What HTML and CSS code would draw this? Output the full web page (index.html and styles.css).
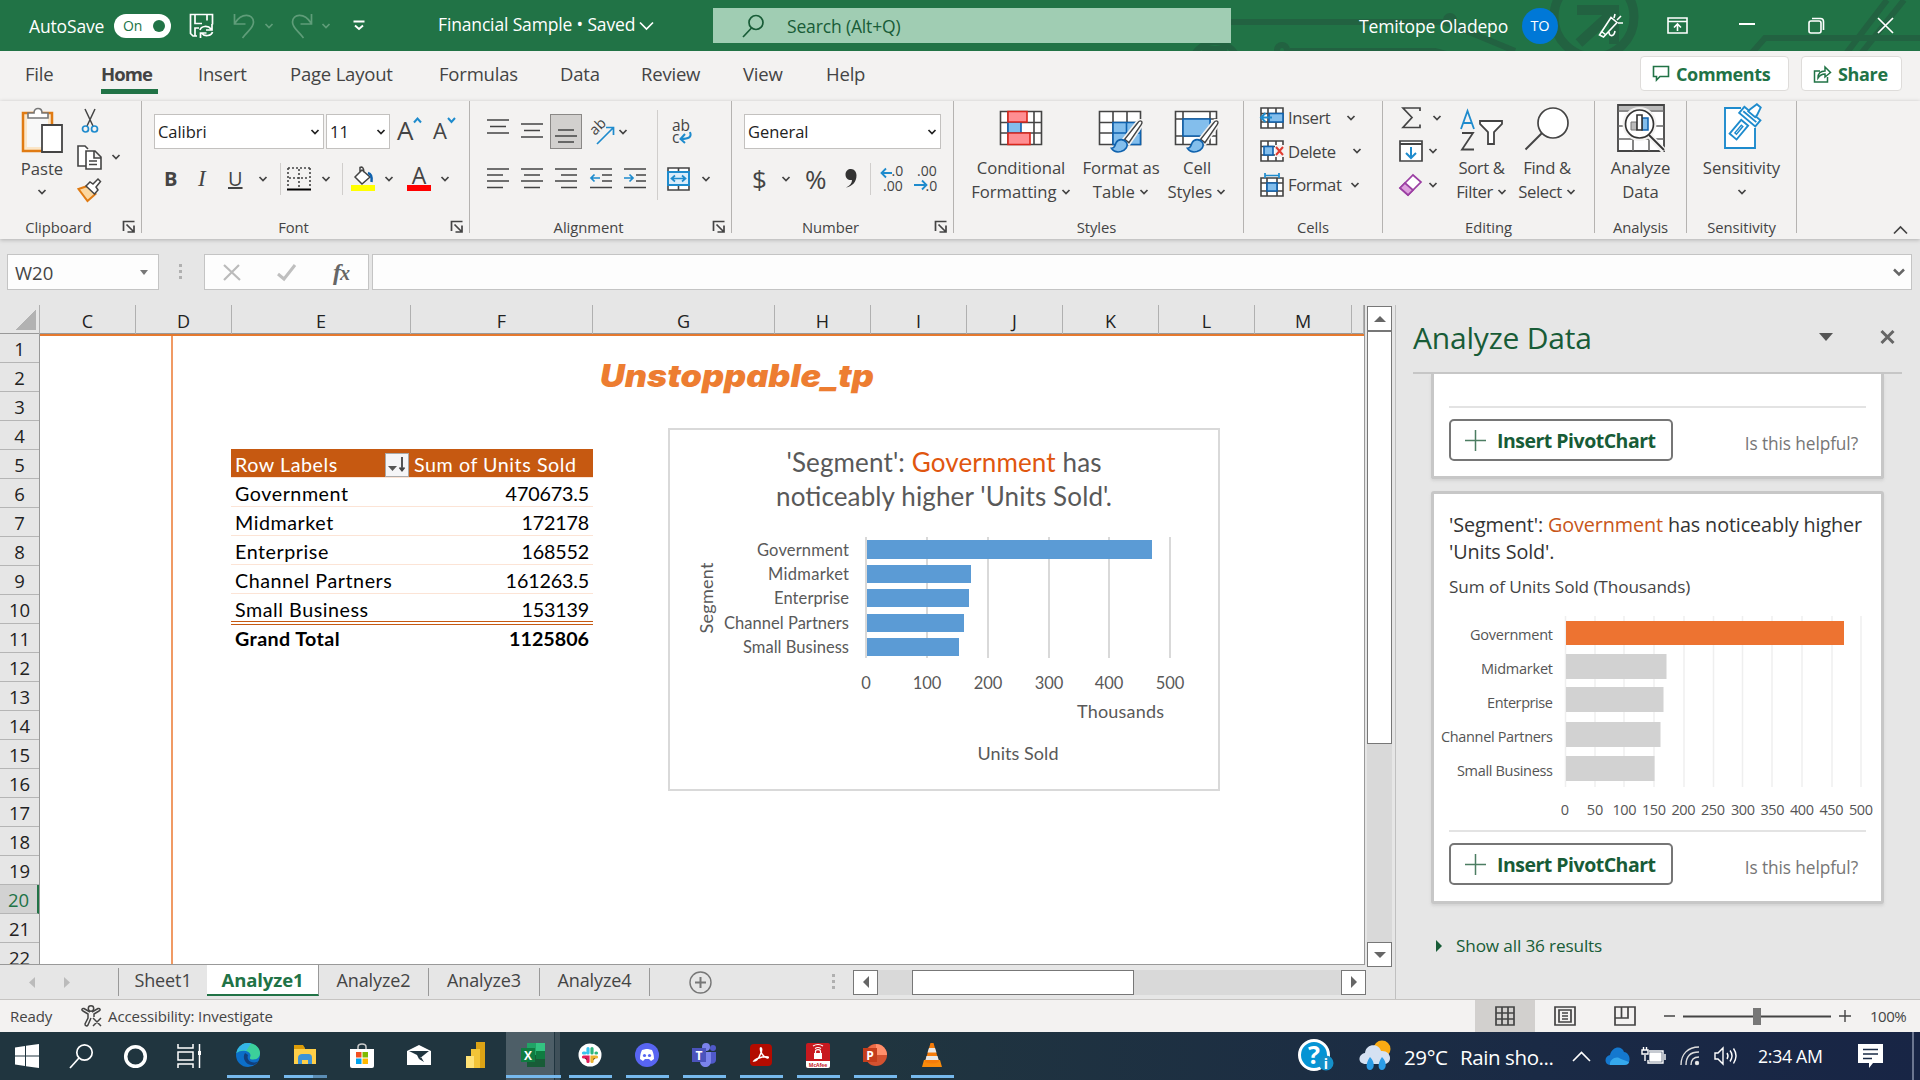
FILE: index.html
```html
<!DOCTYPE html>
<html lang="en">
<head>
<meta charset="utf-8">
<title>Financial Sample - Excel</title>
<link rel="stylesheet" href="styles.css">
</head>
<body>
<svg class="defs" width="0" height="0">
  <defs>
    <symbol id="chev" viewBox="0 0 10 8"><path d="M1.5 2l3.5 3.6L8.500 2" fill="none" stroke="currentColor" stroke-width="1.700"/></symbol>
    <symbol id="launch" viewBox="0 0 14 14"><path d="M1.500 11V1.500H12.500M4.500 4.500l7 7M12 5.500V12H5.500" fill="none" stroke="#444" stroke-width="1.700"/></symbol>
    <symbol id="brush" viewBox="0 0 36 36"><path d="M32 2c2 0 2.500 1.500 1 4L20 25l-4.500-3.500L29 4.500C30 3 31 2 32 2z" fill="#fff" stroke="#f3f2f1" stroke-width="5"/><path d="M32 2c2 0 2.500 1.500 1 4L20 25l-4.500-3.500L29 4.500C30 3 31 2 32 2z" fill="#fff" stroke="#444" stroke-width="1.500"/><path d="M1.500 31c4 0 3.500-3 5-6 2-4 8-4.500 11 0 2 4-1 8-6 9.500-4 1-8-.5-10-3.500z" fill="#83beec" stroke="#0f62ae" stroke-width="1.700"/></symbol>
  </defs>
</svg>
<div class="window">
  <header class="titlebar">
    <svg class="circuit" viewBox="0 0 760 51" width="760" height="51">
      <g fill="none" stroke="#226241" stroke-width="6">
        <path d="M70 22H285l70 29"/><circle cx="290" cy="20" r="4"/><circle cx="55" cy="66" r="24"/><path d="M130 51H275l30 8"/><circle cx="122" cy="50" r="5"/>
        <circle cx="434" cy="17" r="40" stroke-width="9"/><path d="M417 10h37v34M452 13l-33 30" stroke-width="10"/>
        <path d="M590 55l15-17h155M685 55l42-55M700 55l44-55"/>
      </g>
      <rect x="42" y="46" width="25" height="5" fill="#226241"/>
    </svg>
    <span>AutoSave</span>
    <span class="toggle">On<i></i></span>
    <svg width="26" height="26" viewBox="0 0 26 26" fill="none" stroke="#fff" stroke-width="1.700"><path d="M8 23H4L1.500 20.500V1.500h22v10M6 1.500v9h7M18 1.500v6M6 23v-8h4"/><path d="M11 17c1-4 8-5 11-1M23 11v6h-6M23.500 19c-1 4-8 5-11 1M11.500 25v-5h6"/></svg>
    <svg width="23" height="26" viewBox="0 0 23 26" fill="none" stroke="#5f9d79" stroke-width="1.700"><path d="M1.500 1v10h11M2 10C9-1 20 1 20.500 9c0 6-5 8-11 16"/></svg>
    <svg class="dim" width="10" height="8"><use href="#chev"/></svg>
    <svg width="23" height="26" viewBox="0 0 23 26" fill="none" stroke="#5f9d79" stroke-width="1.700"><path d="M20.500 1v10h-11M20 10C13-1 2 1 1.500 9c0 6 5 8 11 16"/></svg>
    <svg class="dim" width="10" height="8"><use href="#chev"/></svg>
    <svg width="14" height="11" viewBox="0 0 14 11" fill="none" stroke="#fff" stroke-width="1.900"><path d="M1.500 1.500h11M3 5.500l4 3.500 4-3.500"/></svg>
    <span class="doc">Financial Sample • Saved</span>
    <svg width="15" height="10" viewBox="0 0 15 10" fill="none" stroke="#fff" stroke-width="1.700"><path d="M1 1.500l6.500 6.500L14 1.500"/></svg>
    <div class="search"><svg width="23" height="24" viewBox="0 0 23 24" fill="none" stroke="#185c37" stroke-width="1.700"><circle cx="14" cy="8.500" r="7"/><path d="M9.500 14L1 23"/></svg><span>Search (Alt+Q)</span></div>
    <span class="user">Temitope Oladepo</span>
    <span class="avatar">TO</span>
    <svg width="26" height="26" viewBox="0 0 26 26" fill="none" stroke="#fff" stroke-width="1.600"><path d="M1.500 22L13 4.500l6 5L5.500 24zM3 18l5 4M11 19c0 5 5 5 6-1M16 5l1-4M19 7l4-4M20 10h5" /></svg>
    <svg width="21" height="17" viewBox="0 0 21 17" fill="none" stroke="#fff" stroke-width="1.600"><path d="M1 1h19v15H1zM1 4.500h19M10.500 14V7.500M7 10.500L10.500 7l3.500 3.500"/></svg>
    <svg width="16" height="6"><path d="M0 1h16" stroke="#fff" stroke-width="2"/></svg>
    <svg width="17" height="17" viewBox="0 0 17 17" fill="none" stroke="#fff" stroke-width="1.600"><rect x="1" y="4" width="12" height="12" rx="2"/><path d="M4 1.500h8.500c2 0 3 1 3 3V13"/></svg>
    <svg width="17" height="17" viewBox="0 0 17 17" fill="none" stroke="#fff" stroke-width="1.700"><path d="M1 1l15 15M16 1L1 16"/></svg>
  </header>

  <nav class="tabs">
    <span>File</span><span class="on">Home</span><span>Insert</span><span>Page Layout</span><span>Formulas</span><span>Data</span><span>Review</span><span>View</span><span>Help</span>
    <span class="pill"><svg width="18" height="17" viewBox="0 0 18 17" fill="none" stroke="#217346" stroke-width="1.600"><path d="M1.500 1.500h15v10H8L4.500 15v-3.500h-3z"/></svg>Comments</span>
    <span class="pill"><svg width="19" height="18" viewBox="0 0 19 18" fill="none" stroke="#217346" stroke-width="1.500"><path d="M7 6H1.500v11h13v-5M5 13c0-5 3-7 7-7V2l5.500 5.500L12 12V9c-3 0-5 1-7 4z"/></svg>Share</span>
  </nav>

  <section class="ribbon">
    <div class="group clip">
      <div class="stack paste">
        <svg width="42" height="46" viewBox="0 0 42 46"><path d="M2 6h29v38H2z" fill="#fbe6c8" stroke="#e07b13" stroke-width="2.500"/><path d="M6 10h21v30H6z" fill="#f8f8f8"/><path d="M7 11V6h6c0-6 8-6 8 0h6v5z" fill="#fff" stroke="#777" stroke-width="1.600"/><path d="M21 18h20v27H21z" fill="#fff" stroke="#444" stroke-width="1.800"/></svg>
        <span>Paste</span><svg width="10" height="8"><use href="#chev"/></svg>
      </div>
      <div class="clipcol">
        <svg width="18" height="25" viewBox="0 0 18 25" fill="none"><path d="M4 1l8 17M14 1L6 18" stroke="#444" stroke-width="1.500"/><circle cx="4.500" cy="21" r="3" stroke="#1e8bcd" stroke-width="1.700"/><circle cx="13.500" cy="21" r="3" stroke="#1e8bcd" stroke-width="1.700"/></svg>
        <div class="copy"><svg width="25" height="25" viewBox="0 0 25 25" fill="#fff" stroke="#444" stroke-width="1.600"><path d="M9 21H1V1h7l3 3"/><path d="M9 6h9l6 6v12H9zM17 6v7h7M12 16h8M12 19.500h8"/></svg><svg width="10" height="8"><use href="#chev"/></svg></div>
        <svg width="25" height="24" viewBox="0 0 25 24"><path d="M1.500 11l9-3 8 8-8 7z" fill="#fbd7a0" stroke="#e07b13" stroke-width="2"/><path d="M9 8l4-4 3 2 5-5 2.500 2.500-4.500 5.500 2 3-3.500 4z" fill="#fff" stroke="#444" stroke-width="1.500"/></svg>
      </div>
      <footer><span>Clipboard</span><svg width="14" height="14"><use href="#launch"/></svg></footer>
    </div>

    <div class="group font">
      <div class="r1">
        <span class="combo">Calibri<svg width="10" height="8"><use href="#chev"/></svg></span>
        <span class="combo">11<svg width="10" height="8"><use href="#chev"/></svg></span>
        <span class="bigA">A<svg width="9" height="7" viewBox="0 0 9 7" fill="none" stroke="#1e8bcd" stroke-width="2"><path d="M1 5.500l3.500-4 3.500 4"/></svg></span>
        <span class="bigA sm">A<svg width="9" height="7" viewBox="0 0 9 7" fill="none" stroke="#1e8bcd" stroke-width="2"><path d="M1 1l3.500 4L8 1"/></svg></span>
      </div>
      <div class="r2">
        <b>B</b><em>I</em><u>U</u><svg width="10" height="8"><use href="#chev"/></svg><i class="bar"></i>
        <svg width="24" height="24" viewBox="0 0 24 24" fill="none" stroke="#444" stroke-width="1.600"><path d="M1 1h22M1 1v20M23 1v20M12 2v18M2 11h20" stroke-dasharray="2 2"/><path d="M0 22.500h24" stroke="#000" stroke-width="2"/></svg>
        <svg width="10" height="8"><use href="#chev"/></svg><i class="bar"></i>
        <svg width="24" height="25" viewBox="0 0 24 25"><path d="M0 19h24v6H0z" fill="#ff0"/><path d="M4 11l7-7 8 7-8 7zM9 6V1.500c2-1 4 0 4 5" fill="#fff" stroke="#444" stroke-width="1.500"/><path d="M17 7c4 1 4 5 3.500 9" stroke="#0f62ae" fill="none" stroke-width="2.500"/></svg>
        <svg width="10" height="8"><use href="#chev"/></svg>
        <span class="fontcolor">A</span><svg width="10" height="8"><use href="#chev"/></svg>
      </div>
      <footer><span>Font</span><svg width="14" height="14"><use href="#launch"/></svg></footer>
    </div>

    <div class="group align">
      <div class="r1">
        <svg width="22" height="34" viewBox="0 0 22 34" stroke="#444" stroke-width="1.700"><path d="M0 5h22M3 11.500h16M0 18h22"/></svg>
        <svg width="22" height="34" viewBox="0 0 22 34" stroke="#444" stroke-width="1.700"><path d="M0 9h22M3 15.500h16M0 22h22"/></svg>
        <span class="pressed"><svg width="22" height="34" viewBox="0 0 22 34" stroke="#444" stroke-width="1.700"><path d="M3 15h16M0 21h22M3 27h16"/></svg></span>
        <svg width="26" height="26" viewBox="0 0 26 26"><text transform="translate(6 17) rotate(-45)" font-size="14.500" fill="#444">ab</text><path d="M8 25L24 9M17 8.500h7.500V16" fill="none" stroke="#1e8bcd" stroke-width="1.700"/></svg>
        <svg width="10" height="8"><use href="#chev"/></svg>
        <svg width="22" height="26" viewBox="0 0 22 26"><text x="1" y="12" font-size="15.500" fill="#444">ab</text><text x="1" y="24" font-size="15.500" fill="#444">c</text><path d="M19 13c2 5-1 7-9 7M14 15l-4.500 5 4.500 4" fill="none" stroke="#1e8bcd" stroke-width="2"/></svg>
      </div>
      <div class="r2">
        <svg width="22" height="21" stroke="#444" stroke-width="1.700"><path d="M0 1h22M0 7h16M0 13h22M0 19.500h16"/></svg>
        <svg width="22" height="21" stroke="#444" stroke-width="1.700"><path d="M0 1h22M3 7h16M0 13h22M3 19.500h16"/></svg>
        <svg width="22" height="21" stroke="#444" stroke-width="1.700"><path d="M0 1h22M6 7h16M0 13h22M6 19.500h16"/></svg>
        <svg width="22" height="21" stroke="#444" stroke-width="1.700"><path d="M0 1h22M12 7h10M12 13h10M0 19.500h22"/><path d="M10 10H1M4.500 6.500L1 10l3.500 3.500" fill="none" stroke="#1e8bcd"/></svg>
        <svg width="22" height="21" stroke="#444" stroke-width="1.700"><path d="M0 1h22M12 7h10M12 13h10M0 19.500h22"/><path d="M0 10h9M5.500 6.500L9 10l-3.500 3.500" fill="none" stroke="#1e8bcd"/></svg>
        <svg width="23" height="24" viewBox="0 0 23 24" fill="#fff" stroke="#444" stroke-width="1.600"><path d="M1 1h21v22H1zM11.500 1v22"/><path d="M1 5h21v13H1z" fill="#d9ecfa" stroke="#1e8bcd" stroke-width="2"/><path d="M5 11.500h13M8 8.500l-3.500 3L8 14.500M15 8.500l3.500 3-3.500 3" fill="none" stroke="#1e8bcd" stroke-width="1.700"/></svg>
        <svg width="10" height="8"><use href="#chev"/></svg>
      </div>
      <footer><span>Alignment</span><svg width="14" height="14"><use href="#launch"/></svg></footer>
    </div>

    <div class="group number">
      <div class="r1"><span class="combo">General<svg width="10" height="8"><use href="#chev"/></svg></span></div>
      <div class="r2">
        <span class="sym">$</span><svg width="10" height="8"><use href="#chev"/></svg><span class="sym">%</span>
        <svg width="12" height="19" viewBox="0 0 12 19"><path d="M1 18.500C5 17 7 14 7 11 3 11.500 .5 9 .5 5.500.5 2 3 0 6 0c3.500 0 5.500 3 5.500 6.500 0 6-4 11-10.500 12z" fill="#333"/></svg>
        <i class="bar"></i>
        <svg width="24" height="28" viewBox="0 0 24 28"><text x="11.500" y="11" font-size="14" fill="#444">.0</text><text x="3" y="26" font-size="14" fill="#444">.00</text><path d="M12 8H1.500M6 3.500L1.500 8 6 12.500" fill="none" stroke="#1e8bcd" stroke-width="1.800"/></svg>
        <svg width="24" height="28" viewBox="0 0 24 28"><text x="3" y="11" font-size="14" fill="#444">.00</text><text x="11.500" y="26" font-size="14" fill="#444">.0</text><path d="M0 20h12M8 15.500l4.500 4.500L8 24.500" fill="none" stroke="#1e8bcd" stroke-width="1.800"/></svg>
      </div>
      <footer><span>Number</span><svg width="14" height="14"><use href="#launch"/></svg></footer>
    </div>

    <div class="group styles">
      <div class="stack big"><svg width="44" height="42" viewBox="0 0 44 42"><path d="M1.500 1.500h41v33h-41zM1.500 12.500h41M1.500 23h41M9 1.500v33M35 1.500v33" fill="#fff" stroke="#444" stroke-width="1.600"/><path d="M9 12h13v11H9z" fill="#83beec" stroke="#0f62ae" stroke-width="1.600"/><path d="M9 1.500h19V12H9zM9 23h22v11.500H9z" fill="#ff8e92" stroke="#d9261c" stroke-width="1.600"/></svg><span>Conditional</span><span>Formatting <svg width="10" height="8"><use href="#chev"/></svg></span></div>
      <div class="stack big"><svg width="46" height="42" viewBox="0 0 46 42"><path d="M1.500 1.500h41v33h-41zM1.500 12.500h41M15 1.500v33M29 1.500v33M1.500 23h41" fill="#fff" stroke="#444" stroke-width="1.600"/><path d="M15 12.500h27.500v22H15zM28.500 12.500v22M15 23h27.500" fill="#83beec" stroke="#0f62ae" stroke-width="1.600"/><svg x="12" y="9" width="34" height="34"><use href="#brush"/></svg></svg><span>Format as</span><span>Table <svg width="10" height="8"><use href="#chev"/></svg></span></div>
      <div class="stack big"><svg width="46" height="42" viewBox="0 0 46 42"><path d="M1.500 1.500h41v33h-41zM1.500 9h41M9 1.500v33M36 1.500v33M1.500 26h41" fill="#fff" stroke="#444" stroke-width="1.600"/><path d="M9 9h27v17H9z" fill="#83beec" stroke="#0f62ae" stroke-width="1.600"/><svg x="12" y="9" width="34" height="34"><use href="#brush"/></svg></svg><span>Cell</span><span>Styles <svg width="10" height="8"><use href="#chev"/></svg></span></div>
      <footer><span>Styles</span></footer>
    </div>

    <div class="group cells">
      <div class="line"><svg width="24" height="22" viewBox="0 0 24 22"><path d="M1 1h22v20H1zM1 6.500h22M1 15h22M8 1v20M16 1v20" fill="#fff" stroke="#444" stroke-width="1.600"/><path d="M9 6.500h14V15H9z" fill="#83beec" stroke="#0f62ae" stroke-width="1.600"/><path d="M12 10.500H1M5.500 6L1 10.500 5.500 15" fill="none" stroke="#1e8bcd" stroke-width="2"/></svg><span>Insert</span><svg width="10" height="8"><use href="#chev"/></svg></div>
      <div class="line del"><svg width="24" height="22" viewBox="0 0 24 22"><path d="M1 1h22v20H1zM1 6.500h22M1 15h22M8 1v20M16 1v20" fill="#fff" stroke="#444" stroke-width="1.600"/><path d="M15 5h9v12h-9z" fill="#f3f2f1"/><path d="M4 6.500h9V15H4z" fill="#83beec" stroke="#0f62ae" stroke-width="1.600"/><path d="M16 7l7 8M23 7l-7 8" stroke="#e03c31" stroke-width="2"/></svg><span>Delete</span><svg width="10" height="8"><use href="#chev"/></svg></div>
      <div class="line fmt"><svg width="24" height="24" viewBox="0 0 24 24"><path d="M1 5h22v18H1zM1 10h22M1 18h22M7 5v18M17 5v18" fill="#fff" stroke="#444" stroke-width="1.600"/><path d="M7 10h10v8H7z" fill="#83beec" stroke="#0f62ae" stroke-width="1.600"/><path d="M5 0v5M19 0v5M5 2.500h14" stroke="#1e8bcd" stroke-width="1.700"/></svg><span>Format</span><svg width="10" height="8"><use href="#chev"/></svg></div>
      <footer><span>Cells</span></footer>
    </div>

    <div class="group editing">
      <div class="edcol">
        <div class="sum"><svg width="24" height="22" viewBox="0 0 24 22"><path d="M21 4V1H4l9 9.500L4 20.500h17v-3" fill="none" stroke="#444" stroke-width="1.700"/></svg><svg width="10" height="8"><use href="#chev"/></svg></div>
        <div><svg width="24" height="22" viewBox="0 0 24 22"><path d="M1 1h22v20H1z" fill="#fff" stroke="#444" stroke-width="1.700"/><path d="M1 4h22" stroke="#444" stroke-width="2"/><path d="M12 7v11M7 13l5 5 5-5" fill="none" stroke="#1e8bcd" stroke-width="2"/></svg><svg width="10" height="8"><use href="#chev"/></svg></div>
        <div><svg width="24" height="24" viewBox="0 0 24 24"><path d="M1 15L14 2l8 7L9 22z" fill="#fff" stroke="#9b3fa3" stroke-width="1.700"/><path d="M1 15l5-5 8 7-5 5z" fill="#dda0dd" stroke="#9b3fa3" stroke-width="1.700"/></svg><svg width="10" height="8"><use href="#chev"/></svg></div>
      </div>
      <div class="stack big"><svg width="44" height="42" viewBox="0 0 44 42"><path d="M1 19L7.500 1 14 19M3 13h9" fill="none" stroke="#1e8bcd" stroke-width="1.800"/><path d="M2 23h11L2 39.500h12" fill="none" stroke="#444" stroke-width="1.800"/><path d="M20 11h22v3l-8 8v12h-6V22l-8-8z" fill="#fff" stroke="#444" stroke-width="1.800"/></svg><span>Sort &amp;</span><span>Filter <svg width="10" height="8"><use href="#chev"/></svg></span></div>
      <div class="stack big"><svg width="46" height="46" viewBox="0 0 46 46"><circle cx="29" cy="19" r="15" fill="#fff" stroke="#444" stroke-width="1.700"/><path d="M18 29L1.500 45.500" stroke="#444" stroke-width="1.900"/></svg><span>Find &amp;</span><span>Select <svg width="10" height="8"><use href="#chev"/></svg></span></div>
      <footer><span>Editing</span></footer>
    </div>

    <div class="group analysis">
      <div class="stack big"><svg width="48" height="48" viewBox="0 0 48 48"><path d="M1 1h46v46H1z" fill="#fff" stroke="#444" stroke-width="1.800"/><path d="M2 2h44v4H2z" fill="#bbb"/><path d="M1 7h46M1 22h46M1 35h46M16 35v12M32 35v12" stroke="#666" stroke-width="1.600"/><path d="M31 30l16 17" stroke="#f3f2f1" stroke-width="6"/><circle cx="22.500" cy="20" r="17" fill="#f3f2f1"/><circle cx="22.500" cy="20" r="14" fill="#fff" stroke="#333" stroke-width="1.700"/><path d="M32 31l15 15" stroke="#333" stroke-width="1.800"/><path d="M14 18h6v8h-6z" fill="#bbb" stroke="#777"/><path d="M25 14h6v12h-6z" fill="#83beec" stroke="#0f62ae" stroke-width="1.500"/><path d="M20 11h5v15h-5z" fill="#fff" stroke="#333" stroke-width="1.600"/></svg><span>Analyze</span><span>Data</span></div>
      <footer><span>Analysis</span></footer>
    </div>

    <div class="group sens">
      <div class="stack big"><svg width="46" height="46" viewBox="0 0 46 46" fill="#fff" stroke="#1e8bcd" stroke-width="1.900"><path d="M22 4H6v40h30V24"/><g transform="rotate(40 24 20)"><path d="M20 18h9v18h-9z"/><path d="M23.500 22v10h2V22z" stroke-width="1.400"/><path d="M14 6h21v8H14zM16 10h17" /><path d="M20 6v-3l2-8h5l2 8v3z" transform="translate(0 1)"/></g></svg><span>Sensitivity</span><span><svg width="10" height="8"><use href="#chev"/></svg></span></div>
      <footer><span>Sensitivity</span></footer>
    </div>
    <svg class="collapse" width="15" height="10" viewBox="0 0 15 10" fill="none" stroke="#444" stroke-width="1.700"><path d="M1 8.500L7.500 2 14 8.500"/></svg>
  </section>

  <section class="formulabar">
    <div class="namebox"><span>W20</span><svg width="8" height="5"><path d="M0 0h8L4 5z" fill="#777"/></svg></div>
    <svg width="4" height="16"><path d="M0 0h3v3H0zM0 6h3v3H0zM0 12h3v3H0z" fill="#b0b0b0"/></svg>
    <div class="fx"><svg width="18" height="17" viewBox="0 0 18 17" stroke="#bbb" stroke-width="2.200"><path d="M1 1l16 15M16 1L1 16"/></svg><svg width="20" height="17" viewBox="0 0 20 17" fill="none" stroke="#bfbfbf" stroke-width="3"><path d="M1 10l6 5L18 1"/></svg><span><i>f</i><i>x</i></span></div>
    <div class="formula"><svg width="12" height="9" viewBox="0 0 12 9" fill="none" stroke="#666" stroke-width="2.500"><path d="M1 1.500l5 5 5-5"/></svg></div>
  </section>

  <main class="work">
    <div class="book">
      <div class="colheads"><span class="corner"></span><span>C</span><span>D</span><span>E</span><span>F</span><span>G</span><span>H</span><span>I</span><span>J</span><span>K</span><span>L</span><span>M</span><span></span></div>
      <div class="sheetrow">
        <div class="rowheads"><span>1</span><span>2</span><span>3</span><span>4</span><span>5</span><span>6</span><span>7</span><span>8</span><span>9</span><span>10</span><span>11</span><span>12</span><span>13</span><span>14</span><span>15</span><span>16</span><span>17</span><span>18</span><span>19</span><span class="cur">20</span><span>21</span><span>22</span></div>
        <div class="cellsarea">
          <div class="marginline"></div>
          <h1><span>Unstoppable_tp</span></h1>
          <div class="pivot">
            <div class="prow head"><span>Row Labels</span><i class="filter"><svg width="20" height="18" viewBox="0 0 20 18"><path d="M1 10h9l-4.500 5z" fill="#555"/><path d="M15 1v14M12.500 11.500L15 14.500l2.500-3" fill="none" stroke="#444" stroke-width="1.800"/></svg></i><span>Sum of Units Sold</span></div>
            <div class="prow"><span>Government</span><span class="num">470673.5</span></div>
            <div class="prow"><span>Midmarket</span><span class="num">172178</span></div>
            <div class="prow"><span>Enterprise</span><span class="num">168552</span></div>
            <div class="prow"><span>Channel Partners</span><span class="num">161263.5</span></div>
            <div class="prow last"><span>Small Business</span><span class="num">153139</span></div>
            <div class="prow total"><span>Grand Total</span><span class="num">1125806</span></div>
          </div>
          <svg class="chart" width="552" height="363" viewBox="668 428 552 363">
            <rect x="669" y="429" width="550" height="361" fill="#fff" stroke="#d9d9d9" stroke-width="2"/>
            <g font-size="26" text-anchor="middle"><text x="944" y="472" textLength="315">'Segment': <tspan fill="#e0560f">Government</tspan> has</text><text x="944" y="506" textLength="336">noticeably higher 'Units Sold'.</text></g>
            <path d="M866 537v121M927 537v121M988 537v121M1049 537v121M1109 537v121M1170 537v121" stroke="#d9d9d9" stroke-width="2"/>
            <path d="M867 540h285v19H867zM867 565h104v18H867zM867 589h102v18H867zM867 614h97v18h-97zM867 638h92v18h-92z" fill="#5b9bd5"/>
            <g font-size="16.500" text-anchor="end"><text x="849" y="555.500" textLength="92">Government</text><text x="849" y="579.500" textLength="81">Midmarket</text><text x="849" y="603.500" textLength="75">Enterprise</text><text x="849" y="628.500" textLength="125">Channel Partners</text><text x="849" y="652.500" textLength="106">Small Business</text></g>
            <g font-size="16.500" text-anchor="middle"><text x="866" y="689">0</text><text x="927" y="689">100</text><text x="988" y="689">200</text><text x="1049" y="689">300</text><text x="1109" y="689">400</text><text x="1170" y="689">500</text></g>
            <g font-size="18" text-anchor="middle"><text x="1120.500" y="718" textLength="87">Thousands</text><text x="1018" y="760" textLength="81">Units Sold</text><text transform="translate(713 598) rotate(-90)" textLength="71">Segment</text></g>
          </svg>
        </div>
      </div>
    </div>
    <div class="vscroll"><span class="btn"><svg width="12" height="6"><path d="M0 6h12L6 0z" fill="#666"/></svg></span><span class="thumb"></span><span class="track"></span><span class="btn"><svg width="12" height="6"><path d="M0 0h12L6 6z" fill="#666"/></svg></span></div>
    <aside class="pane">
      <div class="panehead"><h2>Analyze Data</h2><svg width="14" height="8"><path d="M0 0h14L7 8z" fill="#555"/></svg><svg width="15" height="14" viewBox="0 0 15 14" stroke="#666" stroke-width="3"><path d="M1.500 1l12 12M13.500 1l-12 12"/></svg></div>
      <div class="card first">
        <div class="actions"><span class="insert"><svg width="21" height="21" stroke="#4c7d62" stroke-width="1.500"><path d="M10.500 0v21M0 10.500h21"/></svg>Insert PivotChart</span><span class="help">Is this helpful?</span></div>
      </div>
      <div class="card second">
        <p class="insight">'Segment': <em>Government</em> has noticeably higher<br>'Units Sold'.</p>
        <p class="sub">Sum of Units Sold (Thousands)</p>
        <svg class="mini" width="447" height="215" viewBox="1434 616 447 215">
          <path d="M1565.500 617v171M1595 617v171M1624 617v171M1654 617v171M1684 617v171M1713.500 617v171M1742.500 617v171M1772 617v171M1802 617v171M1832 617v171M1861 617v171" stroke="#efefef" stroke-width="1.500"/>
          <path d="M1566 622h278v24h-278z" fill="#ed7331"/><path d="M1566 655h100.500v25H1566zM1566 688h97.500v25H1566zM1566 723h94.500v25H1566zM1566 757h88.500v25H1566z" fill="#d2d2d2"/>
          <g font-size="14.500" text-anchor="end"><text x="1553" y="641" textLength="83">Government</text><text x="1553" y="675" textLength="72">Midmarket</text><text x="1553" y="709" textLength="66">Enterprise</text><text x="1553" y="743" textLength="112">Channel Partners</text><text x="1553" y="777" textLength="96">Small Business</text></g>
          <g font-size="14.500" text-anchor="middle"><text x="1565" y="816">0</text><text x="1595" y="816">50</text><text x="1624.500" y="816" textLength="24">100</text><text x="1654" y="816" textLength="24">150</text><text x="1683.500" y="816" textLength="24">200</text><text x="1713" y="816" textLength="24">250</text><text x="1743" y="816" textLength="24">300</text><text x="1772.500" y="816" textLength="24">350</text><text x="1802" y="816" textLength="24">400</text><text x="1831.500" y="816" textLength="24">450</text><text x="1861" y="816" textLength="24">500</text></g>
        </svg>
        <div class="actions"><span class="insert"><svg width="21" height="21" stroke="#4c7d62" stroke-width="1.500"><path d="M10.500 0v21M0 10.500h21"/></svg>Insert PivotChart</span><span class="help">Is this helpful?</span></div>
      </div>
      <div class="more"><svg width="6" height="12"><path d="M0 0v12l6-6z" fill="#185c37"/></svg><span>Show all 36 results</span></div>
    </aside>
    <div class="sheettabs">
      <svg width="6" height="11"><path d="M6 0v11L0 5.500z" fill="#bbb"/></svg><svg width="6" height="11"><path d="M0 0v11l6-5.500z" fill="#bbb"/></svg>
      <span class="tab t1">Sheet1</span><span class="tab on">Analyze1</span><span class="tab">Analyze2</span><span class="tab">Analyze3</span><span class="tab">Analyze4</span>
      <svg class="add" width="23" height="23" viewBox="0 0 23 23" fill="none" stroke="#777" stroke-width="1.400"><circle cx="11.500" cy="11.500" r="10.500"/><path d="M11.500 6v11M6 11.500h11" stroke-width="2"/></svg>
      <svg width="4" height="16"><path d="M0 0h3v3H0zM0 6h3v3H0zM0 12h3v3H0z" fill="#b0b0b0"/></svg>
      <div class="hscroll"><span class="btn"><svg width="6" height="12"><path d="M6 0v12L0 6z" fill="#666"/></svg></span><span class="track"></span><span class="thumb"></span><span class="track rest"></span><span class="btn"><svg width="6" height="12"><path d="M0 0v12l6-6z" fill="#666"/></svg></span></div>
    </div>
  </main>

  <footer class="status">
    <span>Ready</span>
    <svg width="22" height="22" viewBox="0 0 22 22" fill="none" stroke="#444" stroke-width="1.500"><circle cx="10" cy="3.500" r="2.700"/><path d="M9 7L3 3.500C1 3 0 5 2 6l5 3v4L4 19c0 2 2 2.500 3 1l3-7M11 7l6-3.500c2-.5 3 1.500 1 2.500l-5 3v3M12 13l8 8M20 13l-8 8"/></svg>
    <span class="acc">Accessibility: Investigate</span>
    <span class="view"><svg width="20" height="20" viewBox="0 0 20 20" fill="none" stroke="#444" stroke-width="1.700"><path d="M1 1h18v18H1zM7 1v18M13 1v18M1 7h18M1 13h18"/></svg></span>
    <svg width="22" height="20" viewBox="0 0 22 20" fill="none" stroke="#444" stroke-width="1.700"><path d="M1 1h20v18H1zM5 4h12v12H5zM8 7h6M8 10h6M8 13h6"/></svg>
    <svg width="22" height="20" viewBox="0 0 22 20" fill="none" stroke="#444" stroke-width="1.700"><path d="M1 1h20v18H1zM1 12h13V1M7.500 1v11"/></svg>
    <svg width="190" height="20" viewBox="0 0 190 20" stroke="#444" stroke-width="1.400"><path d="M1 10h11M176 10h12M182 4v12"/><path d="M20 10.500h148" stroke-width="2"/><path d="M90 2h8v17h-8z" fill="#777" stroke="none"/></svg>
    <span class="zoom">100%</span>
  </footer>

  <div class="taskbar">
    <div class="sys">
      <svg width="24" height="24" fill="#fff"><path d="M0 3.500L10 2v9.500H0zM11 1.800L24 0v11.500H11zM0 12.500h10V22L0 20.500zM11 12.500h13V24l-13-1.800z"/></svg>
      <svg width="24" height="25" fill="none" stroke="#fff" stroke-width="1.700"><circle cx="15.500" cy="8.500" r="7.700"/><path d="M10 14L1 24"/></svg>
      <svg width="25" height="25" fill="none" stroke="#fff" stroke-width="3.500"><circle cx="11.500" cy="12.500" r="9.800"/></svg>
      <svg width="25" height="24" fill="none" stroke="#fff" stroke-width="1.500"><path d="M1 0v4h15V0M1 8h15v8H1zM1 24v-4h15v4M22.500 0v24"/><path d="M22.500 7v4" stroke-width="3"/></svg>
    </div>
    <div class="apps">
      <span class="run"><svg width="24" height="24" viewBox="0 0 24 24"><circle cx="12" cy="12" r="12" fill="#0c6fc8"/><path d="M.5 10C2 3 7 0 12 0c7 0 12 5 12 10 0 5-4 7-8 6.500-3-.4-2-2-1.500-3.500C15 8 6 6 .5 10z" fill="#3ccf9a"/><path d="M.5 10C2 3 7 0 12 0c2 0 3 .5 3 .5L10 8C6 6.500 3 7.500.5 10z" fill="#35b6e8"/><path d="M9 10c-3 4 0 12 7 12 3 0 5-2 6-3.500-6 3-12-1-10-6.500z" fill="#123f7c"/></svg></span>
      <span class="run multi"><svg width="24" height="22"><path d="M1 1h9l2 3v16H1z" fill="#dc9c08"/><path d="M1 5h22v15H1z" fill="#ffcf48"/><path d="M5 20v-6c0-3 2-4 4-4h6c3 0 4 1 4 4v6h-4v-4H9v4z" fill="#3d93d8"/></svg></span>
      <span><svg width="24" height="25"><path d="M8 7V4c0-4 8-4 8 0v3" fill="none" stroke="#ccc" stroke-width="1.500"/><path d="M0 6h24v17q0 2-2 2H2q-2 0-2-2z" fill="#fff"/><path d="M6 9h5.500v5.500H6z" fill="#f25022"/><path d="M12.500 9H18v5.500h-5.500z" fill="#7fba00"/><path d="M6 15.500h5.500V21H6z" fill="#00a4ef"/><path d="M12.500 15.500H18V21h-5.500z" fill="#ffb900"/></svg></span>
      <span><svg width="24" height="22"><path d="M0 7l12-6 12 6v14H0z" fill="#fff"/><path d="M2 7h20l-10 8-2-4zM12 15l5 3-3-5z" fill="#20353f"/></svg></span>
      <span><svg width="20" height="26"><path d="M10 0h9v26h-9z" fill="#dca315"/><path d="M5 7h9v19H5z" fill="#f2c438"/><path d="M0 14h8v12H0z" fill="#ffe276"/></svg></span>
      <span class="run active"><svg width="24" height="24"><path d="M6 0h18v24H6z" fill="#21a366"/><path d="M15 0h9v8h-9z" fill="#33c481"/><path d="M6 12h18v12H6z" fill="#185c37"/><path d="M15 8h9v8h-9z" fill="#107c41"/><path d="M0 5h14v14H0z" fill="#107c41"/><text x="7" y="16.500" text-anchor="middle" font-size="12" font-weight="700" fill="#fff">X</text></svg></span>
      <span class="run"><svg width="24" height="24"><circle cx="12" cy="12" r="11.500" fill="#fff"/><g stroke-width="3.200" stroke-linecap="round"><path d="M10 5.500v4.500M5.500 10H7" stroke="#36c5f0"/><path d="M14 5.500V10M18.500 10H18" stroke="#2eb67d"/><path d="M14 18.500V14h4.500" stroke="#ecb22e"/><path d="M5.500 14H10v4.500" stroke="#e01e5a"/></g></svg></span>
      <span class="run"><svg width="24" height="24"><circle cx="12" cy="12" r="12" fill="#5865f2"/><path d="M5 16c0-4 1-7 2-9l4-1h2l4 1c1 2 2 5 2 9l-3 2-2-2H10l-2 2z" fill="#fff"/><circle cx="9.500" cy="12.500" r="1.600" fill="#5865f2"/><circle cx="14.500" cy="12.500" r="1.600" fill="#5865f2"/></svg></span>
      <span class="run"><svg width="24" height="24"><circle cx="14" cy="4" r="4" fill="#7b83eb"/><circle cx="21" cy="5" r="3" fill="#5059c9"/><path d="M15 9h9v8c0 4-6 5-8 2z" fill="#5059c9"/><path d="M8 9h11v9c0 8-11 8-11 0z" fill="#7b83eb"/><path d="M0 5h14v14H0z" fill="#4b53bc"/><text x="7" y="16.500" text-anchor="middle" font-size="12" font-weight="700" fill="#fff">T</text></svg></span>
      <span class="run"><svg width="22" height="22"><rect width="22" height="22" rx="4" fill="#b30b00"/><path d="M4 17c2-3 11-5 14-4 1 1-1 1.500-3 0-3-2-5-6-4.500-9 1-1 2 2 0 6-2 5-4 7-6.500 7z" fill="none" stroke="#fff" stroke-width="1.500"/></svg></span>
      <span class="run"><svg width="24" height="25"><rect width="24" height="25" rx="2" fill="#c8191f"/><path d="M0 18h24v5q0 2-2 2H2q-2 0-2-2z" fill="#fff"/><path d="M7 3q5-3 10 0M9 5.500q3-2 6 0M9.500 10.500V8.500c0-2.500 5-2.500 5 0v2" fill="none" stroke="#fff" stroke-width="1.200"/><path d="M8 10h8v6H8z" fill="#fff"/><text x="12" y="23.500" text-anchor="middle" font-size="5" font-weight="700" fill="#c8191f">McAfee</text></svg></span>
      <span class="run"><svg width="24" height="24"><circle cx="13" cy="12" r="11" fill="#d35230"/><path d="M13 1a11 11 0 0 1 11 11H13z" fill="#ff8f6b"/><path d="M13 1v11H3A11 11 0 0 1 13 1z" fill="#ed6c47"/><path d="M0 5h14v14H0z" fill="#c43e1c"/><text x="7" y="16.500" text-anchor="middle" font-size="12" font-weight="700" fill="#fff">P</text></svg></span>
      <span class="run"><svg width="22" height="24"><path d="M3 17h16l2 7H1z" fill="#f98b0c"/><path d="M9.500 0h3L18 19q-7 3-14 0z" fill="#f57c0a"/><path d="M8 5h6l1.500 4.500h-9zM5.500 13h11l1.200 4H4.500z" fill="#e8e8e8"/></svg></span>
    </div>
    <div class="tray">
      <svg width="36" height="34"><circle cx="16" cy="16" r="14.500" fill="#0594d4" stroke="#fff" stroke-width="3"/><text x="16" y="25" text-anchor="middle" font-size="25" font-weight="700" fill="#fff">?</text><circle cx="28" cy="24" r="7.500" fill="#1590c9"/><text x="28" y="29.500" text-anchor="middle" font-size="14" font-weight="700" fill="#fff">i</text></svg>
      <svg width="34" height="32"><circle cx="23" cy="9" r="8.500" fill="#fbab13"/><path d="M7 24c-9 0-8-10-1-11C7 3 20 3 22 11c11-1 12 13 3 13z" fill="#d5e1f2"/><path d="M11 17c6 6 4 13 0 13s-5-6 0-13zM23 17c6 6 4 13 0 13s-5-6 0-13z" fill="#2b9ce6"/></svg>
      <span class="w1">29°C</span><span class="w2">Rain sho...</span>
      <svg width="19" height="11" fill="none" stroke="#fff" stroke-width="1.600"><path d="M1 10l8.500-8.500L18 10"/></svg>
      <svg width="25" height="20"><path d="M5 19C-1 19-1 10 5 9 7 0 17-1 19 6c7 1 8 13 0 13z" fill="#1478cf"/><path d="M5 19c-1-6 7-10 11-6l8 3c0 2-2 3-5 3z" fill="#35a8ec"/></svg>
      <svg width="25" height="18" fill="none" stroke="#fff" stroke-width="1.400"><path d="M8 4h14v12H7v-3M24 7v6M1 3h6v4H1zM2.500 0v3M5.500 0v3M4 8v6"/><path d="M9 6h11v8H9z" fill="#fff"/></svg>
      <svg width="21" height="20" fill="none" stroke="#ddd" stroke-width="1.400"><path d="M1 19C1 8 8 1 19 1M6 19C6 10 10 6 19 6M11 19c0-5 3-8 8-8"/><circle cx="17" cy="17" r="1.500" fill="#fff"/></svg>
      <svg width="24" height="18" fill="none" stroke="#fff" stroke-width="1.400"><path d="M1 6h3l5-5v16l-5-5H1zM13 6q2 3 0 6M16 3.500q4 5 0 11M19.500 1.500q5 7 0 15"/></svg>
      <span class="clock">2:34 AM</span>
      <svg width="25" height="25"><path d="M0 0h25v19H15l-4 5v-5H0z" fill="#fff"/><path d="M5 5.500h15M5 10h15M5 14.500h9" stroke="#1a2b46" stroke-width="1.600"/></svg>
      <i class="peek"></i>
    </div>
  </div>
</div>
</body>
</html>
```

FILE: styles.css
```css
* { box-sizing: border-box; }
body { margin: 0; background: #e6e6e6; font-family: "Open Sans", "Noto Sans", sans-serif; font-size: 16px; color: #444; }
svg { display: block; flex: none; overflow: visible; }
svg text { font-family: inherit; letter-spacing: 0; }
.defs { position: absolute; }
.window { width: 1920px; height: 1080px; display: flex; flex-direction: column; overflow: hidden; white-space: nowrap; }
.window > * { flex: none; }

/* title bar */
.titlebar { position: relative; height: 51px; background: #217346; color: #fff; font-size: 17.5px; letter-spacing: -.15px; display: grid; align-items: center; padding-left: 29px;
  grid-template-columns: 85px 75px 44px 31px 27px 30px 31px 86px 201px 74px 646px 163px 76px 69px 72px 69px 69px 43px; }
.titlebar > * { position: relative; }
.titlebar > .circuit { position: absolute; right: 0; top: 0; overflow: hidden; }
.titlebar .doc { margin-top: -3px; }
.toggle { width: 57px; height: 24px; border-radius: 12px; background: #fff; color: #217346; font-size: 14px; display: flex; align-items: center; justify-content: space-between; padding: 0 6px 0 9px; }
.toggle i { width: 12px; height: 12px; border-radius: 50%; background: #217346; }
.dim { color: #5f9d79; }
.search { width: 518px; height: 35px; background: #a0cdb3; color: #185c37; display: flex; align-items: center; gap: 22px; padding-left: 29px; }
.avatar { width: 36px; height: 36px; border-radius: 50%; background: #0078d7; font-size: 14.5px; display: flex; align-items: center; justify-content: center; }

/* ribbon tabs */
.tabs { height: 50px; background: #f3f2f1; font-size: 18.500px; letter-spacing: -.2px; display: grid; padding: 5px 0 0 25px;
  grid-template-columns: 76px 97px 92px 149px 121px 81px 102px 83px 814px 161px 101px; }
.tabs > span { height: 38px; line-height: 36px; }
.tabs .on { width: 57px; font-weight: 700; border-bottom: 5px solid #217346; letter-spacing: -.9px; }
.tabs .pill { height: 35px; background: #fff; border: 1px solid #dedcda; border-radius: 4px; color: #217346; font-weight: 700; font-size: 18px; letter-spacing: -.35px; display: flex; align-items: center; gap: 6px; padding-left: 11px; }
.tabs .pill:nth-last-child(2) { width: 149px; }
.tabs .pill:last-child { width: 101px; padding-left: 11px; }

/* ribbon */
.ribbon { height: 138px; background: #f3f2f1; box-shadow: 0 1px 4px #b0b0b0; position: relative; display: flex; font-size: 16.700px; letter-spacing: -.05px; }
.group { position: relative; height: 132px; border-right: 1px solid #b5b3b1; display: grid; align-content: start; }
.group > footer { position: absolute; left: 0; right: 0; bottom: -5px; height: 22px; font-size: 14.800px; display: flex; align-items: center; justify-content: center; }
.group > footer svg { position: absolute; right: -19px; top: 4px; }
.ribbon .collapse { margin: 124px 0 0 96px; }
.clip { width: 142px; grid-template-columns: 72px 60px; }
.clip > footer, .font > footer, .align > footer, .number > footer { right: 24px; }
.stack { display: grid; grid-template-columns: minmax(0, 1fr); justify-items: center; align-content: start; }
.stack span { line-height: 24px; height: 24px; }
.stack span svg { display: inline-block; vertical-align: 2px; }
.paste { padding: 6px 0 0 12px; }
.paste span { margin-top: 4px; }
.paste > svg:last-child { margin-top: 7px; }
.clipcol { display: grid; padding: 6px 0 0 5px; grid-template-rows: 36px 34px 30px; align-items: center; }
.clipcol > svg:first-child { margin: -10px 0 0 4px; }
.clipcol > svg:last-child { margin-top: -4px; }
.copy { display: flex; align-items: center; gap: 9px; margin-top: -6px; }
.r1, .r2 { display: grid; align-items: center; }
.r1 { margin-top: 13px; height: 35px; }
.r2 { margin-top: 13px; height: 33px; }
.combo { height: 35px; background: #fff; border: 1px solid #c3c1bf; color: #222; display: flex; align-items: center; justify-content: space-between; padding: 0 3px; font-size: 16.500px; }
.font { width: 328px; padding-left: 12px; }
.font .r1 { grid-template-columns: 170px 64px 34px 30px; column-gap: 2px; }
.font .r1 .bigA { margin-left: 5px; margin-top: -4px; }
.bigA { display: flex; font-size: 26px; line-height: 30px; }
.bigA.sm { font-size: 22px; }
.bigA svg { margin-top: 2px; }
.font .r2 { grid-template-columns: 34px 30px 30px 22px 7px 34px 21px 9px 33px 23px 33px 20px; padding-left: 10px; font-size: 20px; }
.font .r2 em { font-family: "Liberation Serif", serif; font-size: 23px; }
.bar { width: 1px; height: 32px; background: #d0cecc; }
.fontcolor { font-size: 23px; line-height: 18px; width: 24px; height: 25px; text-align: center; border-bottom: 6px solid #f00; }
.align { width: 262px; padding-left: 17px; background: linear-gradient(#d0cecc, #d0cecc) 187px 9px / 1px 90px no-repeat; }
.align .r1 { grid-template-columns: 34px 29px 39px 29px 53px 30px; }
.pressed { width: 32px; height: 35px; background: #d2d0ce; border: 1px solid #8a8886; display: grid; place-items: center; }
.align .r2 { grid-template-columns: 34px 34px 35px 34px 43px 34px 10px; }
.number { width: 222px; padding: 0 12px; }
.number .r2 { grid-template-columns: 29px 24px 40px 25px 10px 34px 24px; padding-left: 8px; }
.sym { font-size: 26px; line-height: 30px; letter-spacing: -1px; }
.styles { width: 290px; grid-template-columns: 134px 66px 86px; }
.styles > footer { right: 4px; }
.big { padding-top: 9px; grid-template-rows: 46px 24px 24px; }
.big > svg { margin-bottom: 4px; }
.cells { width: 139px; padding: 0 0 0 16px; }
.line { display: grid; grid-template-columns: 28px 58px 10px; align-items: center; height: 33.500px; letter-spacing: -.45px; }
.line.del { grid-template-columns: 28px 64px 10px; }
.line.fmt { grid-template-columns: 28px 62px 10px; }
.editing { width: 212px; grid-template-columns: 65px 67px 64px; padding-left: 0; }
.edcol { padding: 0 0 0 16px; }
.edcol > div { display: flex; height: 33.500px; align-items: center; gap: 5px; }
.edcol > .sum { gap: 9px; }
.editing .big { letter-spacing: -.4px; }
.analysis { width: 92px; }
.analysis .big, .sens .big, .editing .big:nth-of-type(3) { padding-top: 3px; grid-template-rows: 52px 24px 24px; }
.sens { width: 110px; }

/* formula bar */
.formulabar { height: 66px; padding: 0 0 0 7px; display: grid; align-items: center; grid-template-columns: 172px 25px 168px 1540px; font-size: 18.500px; }
.formulabar > div { height: 36px; background: #fdfdfd; border: 1px solid #c4c4c4; display: flex; align-items: center; }
.formulabar .namebox { width: 152px; padding: 0 10px 0 7px; justify-content: space-between; }
.formulabar .fx { width: 165px; padding-left: 18px; gap: 36px; }
.fx span { font: 700 24px "Liberation Serif", serif; color: #666; letter-spacing: -1px; }
.fx i + i { font-size: 20px; }
.formulabar .formula { justify-content: flex-end; padding-right: 6px; }

/* workbook */
.work { height: 694px; display: grid; grid-template-columns: 1365px 31px 524px; grid-template-rows: 660px 34px; }
.book { min-width: 0; display: flex; flex-direction: column; overflow: hidden; border-bottom: 1px solid #999; border-right: 1px solid #999; }
.colheads { height: 29px; flex: none; display: grid; grid-template-columns: 40px 96px 96px 179px 182px 182px 96px 96px 96px 96px 96px 97px 12px; border-bottom: 1px solid #999; color: #222; font-size: 18px; text-align: center; line-height: 32px; }
.colheads span { border-right: 1px solid #b0b0b0; }
.corner { background: linear-gradient(135deg, transparent 50%, #b2b2b2 50%) 15px 5px / 21px 20px no-repeat; }
.sheetrow { display: flex; flex: 1; min-height: 0; }
.rowheads { width: 40px; flex: none; border-right: 1px solid #999; color: #222; font-size: 18.500px; }
.rowheads span { display: block; height: 29px; line-height: 30px; text-align: center; border-bottom: 1px solid #b5b5b5; }
.rowheads .cur { background: #d2d2d2; color: #217346; border-right: 2px solid #217346; }
.cellsarea { flex: 1; background: #fff; border-top: 2px solid #e5792e; position: relative; }
.marginline { position: absolute; left: 131px; top: 0; bottom: 0; width: 2px; background: #f09a64; }
h1 { margin: 0; height: 113px; padding: 21px 0 0 560px; font: italic 900 31px/38px Inter, sans-serif; color: #ed7d31; }
h1 span { display: inline-block; transform: scaleX(1.106); transform-origin: left; }
.pivot { margin-left: 191px; width: 362px; color: #000; font-family: Lato, "Open Sans", sans-serif; font-size: 19.700px; letter-spacing: .55px; }
.prow { height: 29px; line-height: 31px; display: flex; justify-content: space-between; padding: 0 4px; border-bottom: 1px solid #fce4d6; }
.prow.head { background: #c65911; color: #fff; display: grid; grid-template-columns: 150px 29px 1fr; align-items: center; }
.num { letter-spacing: -.15px; }
.filter { width: 24px; height: 24px; background: #f5f5f7; border: 1px solid #aaa; display: grid; place-items: center; }
.prow.last { height: 31px; border-bottom: 4px double #c65911; }
.prow.total { height: 27px; line-height: 27px; font-weight: 700; border: 0; letter-spacing: .4px; }
.total .num { letter-spacing: 0; }
.chart { position: absolute; left: 628px; top: 92px; fill: #595959; font-family: Lato, sans-serif; }

.vscroll { margin: 1px 0 -2px 2px; width: 25px; display: flex; flex-direction: column; position: relative; }
.btn { flex: none; width: 25px; height: 25px; background: #fff; border: 1px solid #777; display: grid; place-items: center; }
.vscroll .thumb { height: 413px; background: #fff; border: 1px solid #777; }
.track { flex: 1; background: #d9d9d9; }

.sheettabs { grid-column: 1 / 3; display: grid; align-items: center; padding-left: 29px; grid-template-columns: 35px 54px 89px 112px 110px 111px 110px 182px 21px 513px; font-size: 18px; letter-spacing: -.1px; }
.sheettabs > svg { justify-self: start; }
.sheettabs > .add { margin-left: 39px; }
.tab { height: 28px; line-height: 24px; text-align: center; border-right: 1px solid #999; }
.tab.t1 { border-left: 1px solid #999; border-right: 0; }
.tab.on { height: 31px; line-height: 29px; align-self: start; background: #fff; color: #217346; font-weight: 700; border-bottom: 2px solid #217346; font-size: 18.500px; letter-spacing: -.1px; }
.hscroll { display: flex; height: 25px; width: 513px; }
.hscroll .track { flex: 0 0 34px; }
.hscroll .thumb { width: 222px; background: #fff; border: 1px solid #777; }
.hscroll .rest { flex: 1; }

/* analyze pane */
.pane { grid-column: 3; grid-row: 1 / 3; border-left: 1px solid #c0c0c0; margin-left: -1px; }
.panehead { margin: 0 18px 0 17px; height: 69px; border-bottom: 2px solid #c6c6c6; display: grid; grid-template-columns: 406px 61px 15px; align-items: center; padding-bottom: 3px; }
h2 { margin: 0; font: 400 30px "Open Sans", sans-serif; color: #185c37; letter-spacing: -.2px; }
.card { margin-left: 35px; width: 453px; background: #fff; border: 3px solid #c7c7c7; border-radius: 3px; box-shadow: 0 2px 3px #d3d3d3; padding: 0 15px; }
.card.first { height: 105px; border-top: 0; border-radius: 0 0 3px 3px; padding-top: 32px; }
.actions { width: 417px; border-top: 2px solid #e3e3e3; padding-top: 11px; display: flex; justify-content: space-between; align-items: flex-start; }
.insert { width: 224px; height: 42px; border: 2px solid #767676; border-radius: 5px; color: #185c37; font-weight: 700; font-size: 19.500px; letter-spacing: -.5px; display: flex; align-items: center; gap: 11px; padding-left: 14px; padding-top: 1px; }
.help { color: #767676; font-size: 17.300px; letter-spacing: -.1px; margin: 13px 8px 0 0; }
.card.second { margin-top: 12px; height: 413px; padding-top: 17px; }
.insight { margin: 0; font-size: 19.800px; letter-spacing: -.12px; line-height: 27px; color: #333; }
.insight em { font-style: normal; color: #c8561a; }
.sub { margin: 10px 0 17px; font-size: 17.200px; line-height: 23px; color: #444; letter-spacing: -.1px; }
.mini { margin-left: -15px; fill: #555; }
.more { display: grid; grid-template-columns: 20px 1fr; align-items: center; margin: 30px 0 0 40px; color: #185c37; font-size: 17.200px; letter-spacing: -.15px; }

/* status bar */
.status { height: 33px; background: #f3f2f1; border-top: 1px solid #c6c4c2; display: grid; align-items: center; padding-left: 10px; font-size: 15px; letter-spacing: -.1px;
  grid-template-columns: 71px 27px 1367px 79px 60px 49px 207px 50px; }
.view { width: 60px; height: 32px; background: #d2d0ce; display: grid; place-items: center; }
.status .zoom { letter-spacing: -.5px; }

/* taskbar */
.taskbar { height: 48px; background: linear-gradient(90deg, #20353f, #20353f 45%, #1a2a45 80%, #182545); color: #fff; display: grid; grid-template-columns: 219px 1079px 622px; }
.sys { display: grid; grid-template-columns: 54px 55px 53px 30px; padding-left: 15px; align-items: center; }
.apps { display: flex; }
.apps span { width: 57px; height: 48px; display: grid; place-items: center; padding-bottom: 2px; }
.apps .run { background: linear-gradient(#76b9ed, #76b9ed) 8px 43px / 43px 3px no-repeat; }
.apps .multi { background: linear-gradient(90deg, #76b9ed 67%, #5b8db5 67%) 8px 43px / 43px 3px no-repeat; }
.apps .active { background: linear-gradient(#76b9ed, #76b9ed) 2px 43px / 55px 3px no-repeat, linear-gradient(#4d5e67, #4d5e67) 2px 0 / 48px 48px no-repeat, linear-gradient(#3f5059, #3f5059) 51px 0 / 5px 48px no-repeat; }
.tray { display: grid; align-items: center; grid-template-columns: 61px 45px 56px 112px 33px 36px 39px 34px 44px 100px 54px 8px; }
.w1, .w2 { font-size: 20.500px; letter-spacing: -.4px; padding-top: 2px; }
.clock { font-size: 17.700px; letter-spacing: -.3px; }
.peek { width: 2px; height: 48px; background: #6b7690; }
```
